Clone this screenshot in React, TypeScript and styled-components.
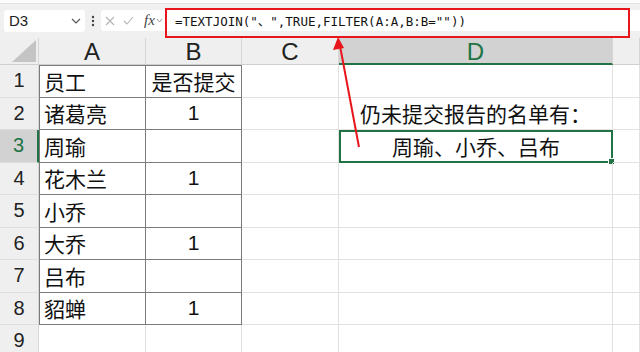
import React from 'react';
import styled, { createGlobalStyle, css } from 'styled-components';

const GREEN = '#217346';

const GlobalStyle = createGlobalStyle`
  html, body {
    margin: 0;
    padding: 0;
    background: #ffffff;
    overflow: hidden;
  }
  body {
    font-family: "Liberation Sans", "Noto Sans CJK SC", sans-serif;
  }
`;

const Page = styled.div`
  position: relative;
  width: 640px;
  height: 352px;
  overflow: hidden;
  background: #ffffff;
`;

const TopStrip = styled.div`
  height: 4px;
  background: #fbfbfb;
  border-bottom: 1px solid #e3e3e3;
  box-sizing: border-box;
`;

const FormulaRow = styled.div`
  height: 34px;
  background: #f0f0f0;
  display: flex;
  align-items: center;
  padding: 0 0 0 4px;
  box-sizing: border-box;
`;

const NameBox = styled.div`
  width: 81px;
  height: 22px;
  background: #fff;
  border-radius: 3px;
  display: flex;
  align-items: center;
  justify-content: space-between;
  padding: 0 4px 0 5px;
  box-sizing: border-box;
  font-size: 15px;
  color: #222;
  margin-top: -1px;
`;

const Dots = styled.div`
  width: 16px;
  display: flex;
  justify-content: center;
`;

const FormulaBox = styled.div`
  flex: 1;
  height: 21px;
  background: #fff;
  border-radius: 3px 0 0 3px;
  display: flex;
  align-items: center;
  margin-top: -1px;
`;

const IconGroup = styled.div`
  width: 64px;
  display: flex;
  align-items: center;
  gap: 8px;
  padding-left: 4px;
  box-sizing: border-box;
`;

const Fx = styled.span`
  font-family: "Liberation Serif", serif;
  font-style: italic;
  font-size: 15px;
  color: #444;
  margin-left: 2px;
`;

const FormulaText = styled.div`
  margin-left: 10px;
  font-family: "DejaVu Sans Mono", "Noto Sans CJK SC", monospace;
  font-size: 12.5px;
  color: #111;
  white-space: nowrap;
`;

const RedBox = styled.div`
  position: absolute;
  left: 165px;
  top: 8px;
  width: 465px;
  height: 30px;
  border: 2px solid #e8161c;
  box-sizing: border-box;
`;

const Arrow = styled.svg`
  position: absolute;
  left: 0;
  top: 0;
  pointer-events: none;
`;

const Sheet = styled.div`
  display: grid;
  grid-template-columns: 39px 107px 96px 97px 274px 1fr;
  grid-template-rows: 27px repeat(9, 32.5px);
`;

const ColHead = styled.div<{ $active?: boolean }>`
  background: ${(p) => (p.$active ? '#d2d2d2' : '#efefef')};
  color: ${(p) => (p.$active ? GREEN : '#222')};
  border-right: 1px solid #d6d6d6;
  border-bottom: ${(p) => (p.$active ? `2px solid ${GREEN}` : '1px solid #cfcfcf')};
  box-sizing: border-box;
  display: flex;
  align-items: center;
  justify-content: center;
  font-size: 24px;
  line-height: 1;
  padding-top: 2px;
`;

const Corner = styled.div`
  background: #efefef;
  border-right: 1px solid #d6d6d6;
  border-bottom: 1px solid #cfcfcf;
  box-sizing: border-box;
  display: flex;
  align-items: flex-end;
  justify-content: flex-end;
  padding: 0 2px 2px 0;
`;

const RowHead = styled.div<{ $active?: boolean }>`
  background: ${(p) => (p.$active ? '#d2d2d2' : '#efefef')};
  color: ${(p) => (p.$active ? GREEN : '#222')};
  border-right: ${(p) => (p.$active ? `2px solid ${GREEN}` : '1px solid #d6d6d6')};
  border-bottom: 1px solid #dedede;
  box-sizing: border-box;
  display: flex;
  align-items: center;
  justify-content: center;
  font-size: 20px;
`;

const Cell = styled.div<{
  $table?: boolean;
  $first?: boolean;
  $top?: boolean;
  $align?: 'left' | 'center';
  $selected?: boolean;
}>`
  position: relative;
  box-sizing: border-box;
  border-right: 1px solid #e1e1e1;
  border-bottom: 1px solid #e1e1e1;
  display: flex;
  align-items: center;
  justify-content: ${(p) => (p.$align === 'center' ? 'center' : 'flex-start')};
  padding: 0 4px;
  font-size: 21px;
  color: #111;
  white-space: nowrap;
  ${(p) =>
    p.$table &&
    css`
      border-right: 1px solid #7b7b7b;
      border-bottom: 1px solid #7b7b7b;
    `}
  ${(p) =>
    p.$first &&
    css`
      border-left: 1px solid #7b7b7b;
    `}
  ${(p) =>
    p.$top &&
    css`
      border-top: 1px solid #7b7b7b;
    `}
  ${(p) =>
    p.$selected &&
    css`
      border: 2px solid ${GREEN};
      &::after {
        content: '';
        position: absolute;
        right: -4px;
        bottom: -4px;
        width: 5px;
        height: 5px;
        background: ${GREEN};
        border: 1px solid #fff;
      }
    `}
`;

const columns = ['A', 'B', 'C', 'D', ''];

const data: { name: string; done: string }[] = [
  { name: '员工', done: '是否提交' },
  { name: '诸葛亮', done: '1' },
  { name: '周瑜', done: '' },
  { name: '花木兰', done: '1' },
  { name: '小乔', done: '' },
  { name: '大乔', done: '1' },
  { name: '吕布', done: '' },
  { name: '貂蝉', done: '1' },
];

const App: React.FC = () => {
  const rows = Array.from({ length: 9 }, (_, i) => i + 1);

  return (
    <Page>
      <GlobalStyle />
      <TopStrip />
      <FormulaRow>
        <NameBox>
          <span>D3</span>
          <svg width="10" height="6" viewBox="0 0 10 6">
            <polyline points="1,1 5,5 9,1" fill="none" stroke="#555" strokeWidth="1.2" />
          </svg>
        </NameBox>
        <Dots>
          <svg width="4" height="12" viewBox="0 0 4 12">
            <circle cx="2" cy="2" r="1.2" fill="#444" />
            <circle cx="2" cy="6" r="1.2" fill="#444" />
            <circle cx="2" cy="10" r="1.2" fill="#444" />
          </svg>
        </Dots>
        <FormulaBox>
          <IconGroup>
            <svg width="10" height="10" viewBox="0 0 10 10">
              <path d="M1 1 L9 9 M9 1 L1 9" stroke="#b5b5b5" strokeWidth="1.1" />
            </svg>
            <svg width="11" height="9" viewBox="0 0 11 9">
              <polyline points="1,5 4,8 10,1" fill="none" stroke="#b5b5b5" strokeWidth="1.1" />
            </svg>
            <Fx>fx</Fx>
            <svg width="7" height="5" viewBox="0 0 7 5" style={{ marginLeft: -7 }}>
              <polyline points="1,1 3.5,4 6,1" fill="none" stroke="#999" strokeWidth="1" />
            </svg>
          </IconGroup>
          <FormulaText>=TEXTJOIN("、",TRUE,FILTER(A:A,B:B=""))</FormulaText>
        </FormulaBox>
      </FormulaRow>

      <Sheet>
        <Corner>
          <svg width="24" height="22" viewBox="0 0 24 22">
            <polygon points="0,22 24,22 24,0" fill="#c4c4c4" />
          </svg>
        </Corner>
        {columns.map((c, i) => (
          <ColHead key={i} $active={c === 'D'}>
            {c}
          </ColHead>
        ))}
        {rows.map((r) => {
          const item = data[r - 1];
          const inTable = !!item;
          return (
            <React.Fragment key={r}>
              <RowHead $active={r === 3}>{r}</RowHead>
              <Cell $table={inTable} $first={inTable} $top={r === 1}>
                {item ? item.name : ''}
              </Cell>
              <Cell $table={inTable} $top={r === 1} $align="center">
                {item ? item.done : ''}
              </Cell>
              <Cell />
              <Cell $align="center" $selected={r === 3}>
                {r === 2 ? '仍未提交报告的名单有：' : r === 3 ? '周瑜、小乔、吕布' : ''}
              </Cell>
              <Cell />
            </React.Fragment>
          );
        })}
      </Sheet>

      <RedBox />
      <Arrow width="640" height="352" viewBox="0 0 640 352">
        <line x1="359" y1="147" x2="340" y2="46" stroke="#e8161c" strokeWidth="2" />
        <polygon points="338,37 333,50 344,48" fill="#e8161c" />
      </Arrow>
    </Page>
  );
};

export default App;
